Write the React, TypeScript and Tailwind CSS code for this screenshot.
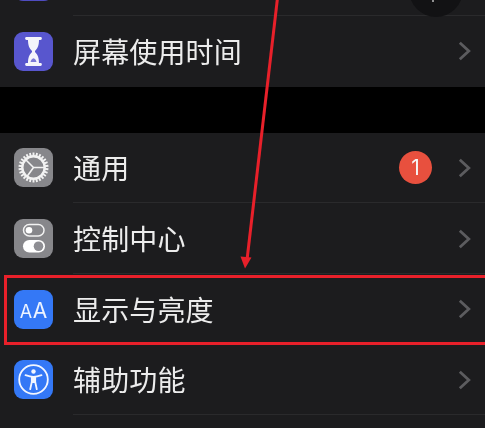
import React from "react";

const Hourglass = () => (
  <svg width="39" height="39" viewBox="0 0 39 39" fill="none">
    <path d="M12.500 6.500h14M12.500 32.500h14" stroke="#f4f4fb" strokeWidth="2.800" strokeLinecap="round" />
    <path d="M14 7.500h11c0 5.500-1 8.500-4 11.500v1c3 3 4 6 4 11.500h-11c0-5.500 1-8.500 4-11.500v-1c-3-3-4-6-4-11.500z" fill="#f4f4fb" />
    <path d="M16.500 30c.5-2.200 1.500-3.200 3-3.800 1.500.6 2.500 1.600 3 3.800z" fill="#7c7ad8" />
  </svg>
);

const Gear = () => {
  const teeth = Array.from({ length: 26 }, (_, i) => (i * 360) / 26);
  return (
    <svg width="39" height="39" viewBox="0 0 39 39" fill="none">
      {teeth.map((a) => (
        <line key={a} x1="19.500" y1="4.500" x2="19.500" y2="9" stroke="#f2f2f2" strokeWidth="1.900" transform={`rotate(${a} 19.500 19.500)`} />
      ))}
      <circle cx="19.500" cy="19.500" r="11.200" stroke="#f2f2f2" strokeWidth="2.400" />
      <path d="M19.500 19.500L31 19.500M19.500 19.500L11.500 11.500M19.500 19.500L13 28.500" stroke="#f2f2f2" strokeWidth="1.600" />
    </svg>
  );
};

const Toggles = () => (
  <svg width="39" height="39" viewBox="0 0 39 39" fill="none">
    <rect x="9.500" y="5.500" width="20.500" height="11.500" rx="5.750" stroke="#f2f2f2" strokeWidth="1.500" />
    <circle cx="15" cy="11.250" r="3.300" fill="#ffffff" />
    <rect x="9" y="21" width="22" height="12.500" rx="6.250" fill="#ffffff" />
    <circle cx="24.500" cy="27.250" r="4.800" fill="#8e8e93" />
  </svg>
);

const Access = () => (
  <svg width="39" height="39" viewBox="0 0 39 39" fill="none">
    <circle cx="19.500" cy="19.500" r="14.300" stroke="#f2f6ff" strokeWidth="1.800" />
    <circle cx="19.500" cy="11.500" r="2.200" fill="#f2f6ff" />
    <path d="M11.500 15.200C14.500 16.200 17 16.800 19.500 16.800S24.500 16.200 27.500 15.200" stroke="#f2f6ff" strokeWidth="1.800" strokeLinecap="round" />
    <path d="M17.800 17V22L16.200 29.200M21.200 17V22L22.800 29.200" stroke="#f2f6ff" strokeWidth="1.800" strokeLinecap="round" strokeLinejoin="round" />
    <path d="M17.800 17h3.400v6h-3.400z" fill="#f2f6ff" />
  </svg>
);

const Chevron = () => (
  <svg width="13" height="20" viewBox="0 0 13 20" fill="none">
    <path d="M1.800 1.800L10.800 10L1.800 18.200" stroke="#5c5c5f" strokeWidth="2.800" />
  </svg>
);

function Row({ bg, icon, label, badge }: { bg: string; icon: React.ReactNode; label: string; badge?: boolean }) {
  return (
    <div className="flex h-[70.67px] items-center pl-[14px] pr-[14px]">
      <div className={`flex h-[39px] w-[39px] shrink-0 items-center justify-center overflow-hidden rounded-[9px] ${bg}`}>
        {icon}
      </div>
      <span className="ml-[20px] flex-1 pb-[1px] text-[28px] leading-none tracking-[0.15px] text-[#ececec]">{label}</span>
      {badge && (
        <span className="mr-[26px] flex h-[33px] w-[33px] items-center justify-center rounded-full bg-[#e8503e] font-['Inter'] text-[21px] leading-none text-[#f6f6f6]">
          1
        </span>
      )}
      <Chevron />
    </div>
  );
}

const Sep = () => <div className="relative -mt-px ml-[73px] h-px bg-[#2a2a2c]" />;

export default function App() {
  return (
    <div
      className="relative h-[428px] w-[485px] overflow-hidden bg-[#1c1c1e] blur-[0.4px]"
      style={{ fontFamily: '"Noto Sans CJK SC", "Liberation Sans", sans-serif' }}
    >
      <div className="h-[16px] overflow-hidden">
        <div className="ml-[14px] mt-[-38px] h-[39px] w-[39px] rounded-[9px] bg-[#4f4cc0]" />
      </div>
      <Sep />
      <Row bg="bg-[#5856ce]" icon={<Hourglass />} label="屏幕使用时间" />
      <div className="h-[46px] bg-black" />
      <Row bg="bg-[#87878b]" icon={<Gear />} label="通用" badge />
      <Sep />
      <Row bg="bg-[#87878b]" icon={<Toggles />} label="控制中心" />
      <Sep />
      <Row
        bg="bg-[#3478f6]"
        icon={
          <span className="flex items-baseline pt-[3px] font-['Inter'] leading-none text-[#eef4ff]">
            <span className="text-[18px]">A</span>
            <span className="ml-[0.5px] text-[21px]">A</span>
          </span>
        }
        label="显示与亮度"
      />
      <Sep />
      <Row bg="bg-[#3478f6]" icon={<Access />} label="辅助功能" />
      <Sep />

      {/* dimmed round control at the top right, cut off by the crop */}
      <div className="absolute left-[409px] top-[-37px] h-[54px] w-[54px] rounded-full bg-[#121214]" />
      <div className="absolute left-[432px] top-0 h-[2px] w-[2px] rounded-full bg-[#bdbdbd]" />

      {/* annotation: red frame and arrow */}
      <div className="absolute left-[4px] top-[275px] h-[70px] w-[500px] border-[3px] border-[#e8202a]" />
      <svg className="absolute left-0 top-0" width="485" height="428" viewBox="0 0 485 428" fill="none">
        <path d="M277.500 -2L247 260" stroke="#e8202a" strokeWidth="3" />
        <path d="M245 268.500L240.500 256.500L251.500 257.500z" fill="#e8202a" />
      </svg>
    </div>
  );
}
